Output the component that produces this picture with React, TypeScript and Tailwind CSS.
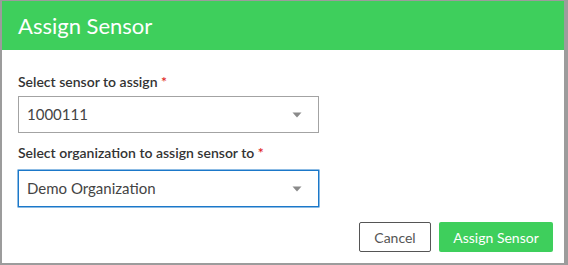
const Caret = () => (
  <svg width="10" height="6" viewBox="0 0 10 6" className="shrink-0">
    <path d="M0.5 0.5 L9.5 0.5 L5 5.5 Z" fill="#8a8a8a" />
  </svg>
);

interface SelectProps {
  value: string;
  focused?: boolean;
}

const FakeSelect = ({ value, focused }: SelectProps) => (
  <div
    className={
      focused
        ? "w-[301px] h-[37px] border border-[#1b78c9] ring-[0.5px] ring-[#1b78c9] flex items-center justify-between pl-[8px] pr-[16px] bg-white"
        : "w-[301px] h-[37px] border border-[#a3a3a3] flex items-center justify-between pl-[8px] pr-[16px] bg-white"
    }
  >
    <span className="text-[15px] text-[#444]">{value}</span>
    <Caret />
  </div>
);

const Label = ({ text }: { text: string }) => (
  <label className="text-[14px] font-semibold text-[#333] leading-none">
    {text} <span className="text-[#e02424]">*</span>
  </label>
);

export default function App() {
  return (
    <div
      className="w-[568px] h-[265px] bg-[#9c9c9c] pl-[2px] pt-[1px]"
      style={{ fontFamily: "Lato, 'Noto Sans', sans-serif" }}
    >
      <div className="w-[562px] h-[262px] bg-white flex flex-col">
        <div className="h-[49px] shrink-0 bg-[#3ecf5c] flex items-center px-[16px]">
          <h1 className="text-[22px] text-white">Assign Sensor</h1>
        </div>
        <div className="flex flex-col pl-[16px] pr-[11px] pt-[25px]">
          <Label text="Select sensor to assign" />
          <div className="mt-[7px]">
            <FakeSelect value="1000111" />
          </div>
          <div className="mt-[7px]">
            <Label text="Select organization to assign sensor to" />
          </div>
          <div className="mt-[6px]">
            <FakeSelect value="Demo Organization" focused />
          </div>
          <div className="flex justify-end gap-[8px] mt-[15px]">
            <button className="w-[72px] h-[30px] border border-[#555] rounded-[2px] text-[14px] text-[#555] bg-white">
              Cancel
            </button>
            <button className="w-[114px] h-[30px] rounded-[2px] text-[14px] text-white bg-[#3ecf5c]">
              Assign Sensor
            </button>
          </div>
        </div>
      </div>
    </div>
  );
}
